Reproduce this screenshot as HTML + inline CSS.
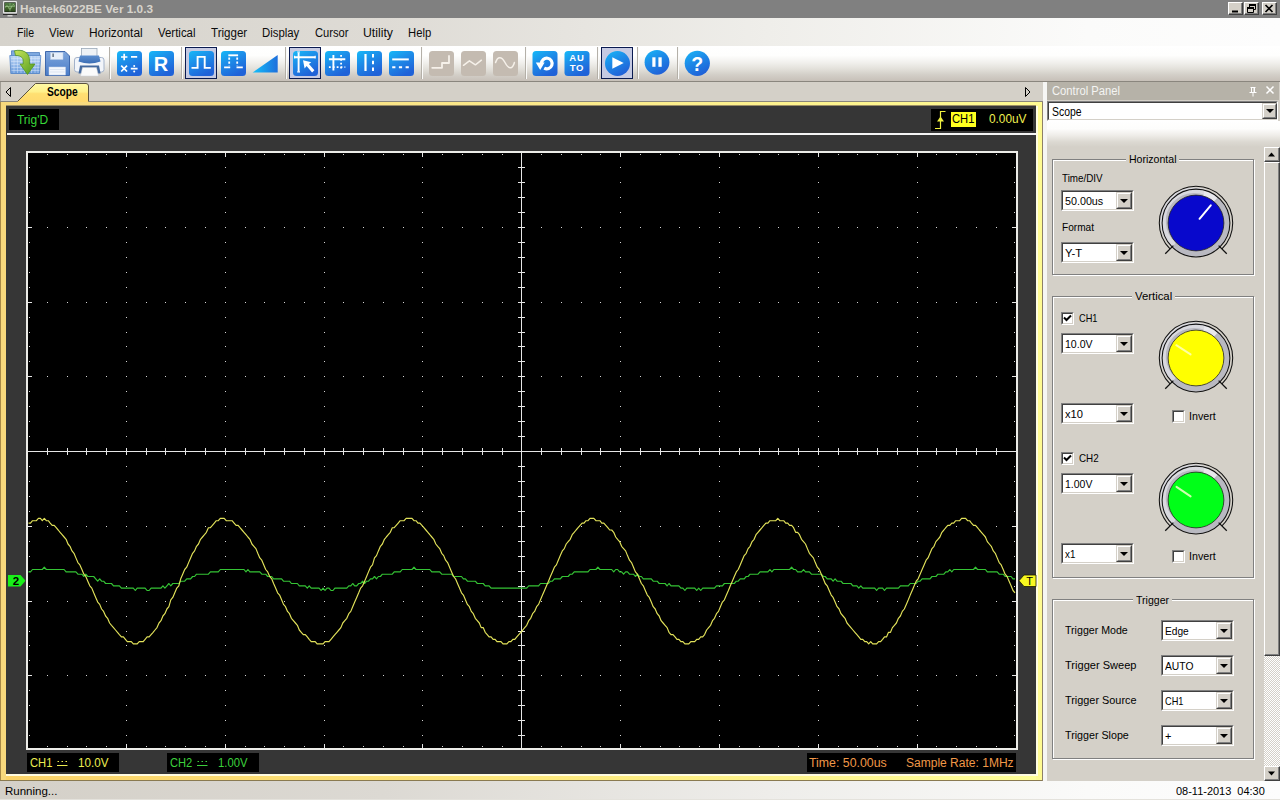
<!DOCTYPE html>
<html lang="en"><head><meta charset="utf-8"><title>Hantek6022BE Ver 1.0.3</title>
<style>
html,body{margin:0;padding:0;}
body{width:1280px;height:800px;overflow:hidden;background:#d4d0c8;font-family:"Liberation Sans",sans-serif;position:relative;}
#app{position:absolute;left:0;top:0;width:1280px;height:800px;overflow:hidden;}
#app div,#app span.t,#app svg{position:absolute;box-sizing:border-box;}
span.t{white-space:pre;display:block;}
.combo{background:#fff;border:1px solid;border-color:#808080 #fff #fff #808080;}
.combo:before{content:"";position:absolute;left:0;top:0;right:0;bottom:0;border:1px solid;border-color:#404040 #d4d0c8 #d4d0c8 #404040;}
.cbtn{background:#d4d0c8;border:1px solid;border-color:#d4d0c8 #404040 #404040 #d4d0c8;}
.cbtn:before{content:"";position:absolute;left:0;top:0;right:0;bottom:0;border:1px solid;border-color:#fff #808080 #808080 #fff;}
.cbtn:after{content:"";position:absolute;left:50%;top:50%;margin:-2px 0 0 -4px;border:4px solid transparent;border-top-color:#000;border-bottom-width:0;}
.grp{border:1px solid #808080;box-shadow:1px 1px 0 #fff, inset 1px 1px 0 #fff;}
.chk{background:#fff;border:1px solid;border-color:#808080 #fff #fff #808080;}
.chk:before{content:"";position:absolute;left:0;top:0;right:0;bottom:0;border:1px solid;border-color:#404040 #d4d0c8 #d4d0c8 #404040;}
.wbtn{background:#d4d0c8;border:1px solid;border-color:#fff #404040 #404040 #fff;box-shadow:inset -1px -1px 0 #808080;}
.sel{background:#c6cae2;border:1px solid #0a1a50;}
.sep{width:1px;background:#b4b0a8;box-shadow:1px 0 0 #fbfbfa;}
</style></head><body><div id="app">

<div style="left:0px;top:0px;width:1280px;height:18px;background:#808080;"></div>
<svg style="left:2px;top:0px" width="17" height="18" viewBox="2 0 17 18"><defs><linearGradient id="scr" x1="0" y1="0" x2="0" y2="1"><stop offset="0" stop-color="#4f7a45"/><stop offset="0.5" stop-color="#456a30"/><stop offset="1" stop-color="#2c4a1c"/></linearGradient></defs>
<rect x="3" y="1" width="14" height="12.500" rx="1" fill="#e6e6e6"/><rect x="4.300" y="2.300" width="11.400" height="9.800" fill="#1c2a16"/><rect x="5" y="3" width="10" height="8.400" fill="url(#scr)"/>
<path d="M5 6.500h10M10 3v8.400" stroke="#9cc890" stroke-width="0.7" opacity="0.7"/><path d="M5.500 7.500q1.500-4 3 0t3-0.500 3-1" stroke="#b8e0a0" stroke-width="0.7" fill="none" opacity="0.8"/>
<rect x="3" y="14" width="14" height="1" fill="#2a2a2a"/><rect x="7.500" y="15" width="5" height="1.500" fill="#d0d0d0"/></svg>
<span class="t" id="t1" style="left:20.00px;top:2.19px;font-size:11px;line-height:14px;color:#d8d4cc;font-weight:bold;transform:scaleX(1.0714);transform-origin:0 0;">Hantek6022BE Ver 1.0.3</span>
<div class="wbtn" style="left:1228px;top:2px;width:15px;height:13px"></div>
<div class="wbtn" style="left:1244px;top:2px;width:15px;height:13px"></div>
<div class="wbtn" style="left:1262px;top:2px;width:15px;height:13px"></div>
<svg style="left:1228px;top:2px" width="50" height="14" viewBox="0 0 50 14">
<rect x="4" y="8.500" width="6" height="2" fill="#000"/>
<path d="M21.5 2.5h6v5h-6zM21.500 3.500h6" stroke="#000" fill="none" stroke-width="1"/><path d="M21 3h7" stroke="#000" stroke-width="2"/>
<path d="M19.500 5.500h6v5h-6z" stroke="#000" fill="#d4d0c8" stroke-width="1"/><path d="M19 6h7" stroke="#000" stroke-width="2"/>
<path d="M37.500 3l7 7M44.500 3l-7 7" stroke="#000" stroke-width="1.700"/>
</svg>
<div style="left:0px;top:18px;width:1280px;height:28px;background:linear-gradient(90deg,#d6d3cc 0%,#dedbd5 30%,#efeeea 60%,#fbfbfa 85%,#fdfdfd 100%);"></div>
<span class="t" id="t2" style="left:16.50px;top:24.54px;font-size:12px;line-height:16px;color:#0c0c0c;transform:scaleX(0.8788);transform-origin:0 0;">File</span>
<span class="t" id="t3" style="left:49.30px;top:24.54px;font-size:12px;line-height:16px;color:#0c0c0c;transform:scaleX(0.9497);transform-origin:0 0;">View</span>
<span class="t" id="t4" style="left:89.30px;top:24.54px;font-size:12px;line-height:16px;color:#0c0c0c;transform:scaleX(0.9939);transform-origin:0 0;">Horizontal</span>
<span class="t" id="t5" style="left:158.30px;top:24.54px;font-size:12px;line-height:16px;color:#0c0c0c;transform:scaleX(0.9528);transform-origin:0 0;">Vertical</span>
<span class="t" id="t6" style="left:210.80px;top:24.54px;font-size:12px;line-height:16px;color:#0c0c0c;transform:scaleX(0.9633);transform-origin:0 0;">Trigger</span>
<span class="t" id="t7" style="left:262.00px;top:24.54px;font-size:12px;line-height:16px;color:#0c0c0c;transform:scaleX(0.9477);transform-origin:0 0;">Display</span>
<span class="t" id="t8" style="left:314.50px;top:24.54px;font-size:12px;line-height:16px;color:#0c0c0c;transform:scaleX(0.9302);transform-origin:0 0;">Cursor</span>
<span class="t" id="t9" style="left:363.30px;top:24.54px;font-size:12px;line-height:16px;color:#0c0c0c;transform:scaleX(1.0224);transform-origin:0 0;">Utility</span>
<span class="t" id="t10" style="left:408.30px;top:24.54px;font-size:12px;line-height:16px;color:#0c0c0c;transform:scaleX(0.9397);transform-origin:0 0;">Help</span>
<div style="left:0px;top:46px;width:1280px;height:35px;background:linear-gradient(180deg,#ffffff 0%,#fefefd 27%,#f2f1ee 46%,#e4e2dc 64%,#d3cfc8 82%,#c7c0b8 100%);"></div>
<div style="left:0px;top:81px;width:1280px;height:1px;background:#8a867e;"></div>
<div class="sep" style="left:109px;top:47px;height:32px"></div>
<div class="sep" style="left:181px;top:47px;height:32px"></div>
<div class="sep" style="left:285px;top:47px;height:32px"></div>
<div class="sep" style="left:421px;top:47px;height:32px"></div>
<div class="sep" style="left:525px;top:47px;height:32px"></div>
<div class="sep" style="left:597px;top:47px;height:32px"></div>
<div class="sep" style="left:637px;top:47px;height:32px"></div>
<div class="sep" style="left:677px;top:47px;height:32px"></div>
<div class="sel" style="left:185px;top:47px;width:32px;height:32px"></div>
<div class="sel" style="left:289px;top:47px;width:32px;height:32px"></div>
<div class="sel" style="left:601px;top:47px;width:32px;height:32px"></div>
<svg style="left:0;top:46px" width="720" height="35" viewBox="0 46 720 35">
<defs>
<linearGradient id="gb" x1="0" y1="0" x2="0.55" y2="1"><stop offset="0" stop-color="#16b9f8"/><stop offset="0.45" stop-color="#1d8ee9"/><stop offset="1" stop-color="#2062d8"/></linearGradient>
<linearGradient id="gt" x1="0" y1="0.5" x2="1" y2="0.5"><stop offset="0" stop-color="#14c0fa"/><stop offset="1" stop-color="#1f6fdc"/></linearGradient>
<linearGradient id="gf" x1="0" y1="0" x2="0" y2="1"><stop offset="0" stop-color="#bcd6f6"/><stop offset="1" stop-color="#6b9cdc"/></linearGradient>
<linearGradient id="gg" x1="0" y1="0" x2="1" y2="1"><stop offset="0" stop-color="#c6e45a"/><stop offset="1" stop-color="#4f9a1c"/></linearGradient>
<linearGradient id="gs" x1="0" y1="0" x2="0" y2="1"><stop offset="0" stop-color="#7fa6dc"/><stop offset="1" stop-color="#4a7cc8"/></linearGradient>
<linearGradient id="gp" x1="0" y1="0" x2="0" y2="1"><stop offset="0" stop-color="#5d8fd0"/><stop offset="1" stop-color="#3c6db4"/></linearGradient>
</defs>
<g>
<path d="M11.500 50.800h11l1.800 1.700h15.200v20.500h-28z" fill="#7ea9e0" stroke="#4f7dbd" stroke-width="0.8"/>
<path d="M9.800 55.500h31l-1.200 18h-28.800z" fill="url(#gf)" stroke="#5585c6" stroke-width="0.8"/>
<path d="M11 58.500h29M11 61.500h29M11.500 64.500h28M11.500 67.500h28M11.500 70.500h28M14 56v17M17.500 56v17M21 56v17M24.500 56v17M28 56v17M31.500 56v17M35 56v17M38 56v17" stroke="#e4effc" stroke-width="0.5" opacity="0.85"/>
<path d="M14.500 50.800C22 49 29.500 52 29.500 60V64H35L27.500 74.500L20 64H23.200V61C23.200 57 20 55.500 15.500 55.500Z" fill="url(#gg)" stroke="#4d8f1a" stroke-width="0.7"/>
</g>
<g>
<path d="M45.500 51.500h19.500l4.500 4.500v19.500h-24z" fill="url(#gs)" stroke="#3f68ac" stroke-width="1"/>
<rect x="50.500" y="52.500" width="12.500" height="7" fill="#e6eefa" stroke="#b7c9e6" stroke-width="0.5"/>
<rect x="52.500" y="53.500" width="1.200" height="3.500" fill="#456"/>
<rect x="49" y="67" width="16.500" height="8" fill="#f4f7fc" stroke="#c7d3e8" stroke-width="0.5"/>
<path d="M50 69.500h14.500M50 72h14.500" stroke="#cfd9ea" stroke-width="0.6"/>
</g>
<g>
<rect x="81.500" y="48.500" width="15.500" height="9" fill="#eef2f6" stroke="#9aa8b8" stroke-width="0.8"/>
<rect x="74.500" y="57.500" width="29.500" height="14.500" rx="2.500" fill="#f2f5fa" stroke="#a3b2ca" stroke-width="1"/>
<path d="M80 55.500h19l1.500 6q-11 4-22 0z" fill="url(#gp)"/>
<path d="M80 65.500h19l1.500 8h-22z" fill="#44699e"/>
<path d="M82.500 67.500h14l2 8.500h-18z" fill="#fbfbfb" stroke="#c8ccd4" stroke-width="0.5"/>
</g>
<rect x="117" y="51" width="25" height="25" rx="3.5" fill="url(#gb)"/>
<path d="M121 57h6.400M124.200 53.800v6.400M131 56.800h6.200M121.200 65.700l5.800 5.800M127 65.700l-5.800 5.800M130.800 68.700h6.800" stroke="#fff" fill="none" stroke-width="1.700"/>
<circle cx="134.200" cy="65.900" r="1" fill="#fff"/><circle cx="134.200" cy="71.500" r="1" fill="#fff"/>
<rect x="149" y="51" width="25" height="25" rx="3.5" fill="url(#gb)"/>
<text x="161.100" y="71" text-anchor="middle" font-family="Liberation Sans, sans-serif" font-weight="bold" font-size="20" fill="#fff">R</text>
<rect x="189" y="51" width="25" height="25" rx="3.5" fill="url(#gb)"/>
<path d="M191.500 67.900h6.100v-11h7.100v11h6.100" stroke="#fff" fill="none" stroke-width="1.900"/>
<rect x="221" y="51" width="25" height="25" rx="3.5" fill="url(#gb)"/>
<path d="M228.300 55.300h9.800" stroke="#fff" fill="none" stroke-width="1.900"/><path d="M224.100 67.400h6.100M236.500 67.400h6.300" stroke="#fff" fill="none" stroke-width="1.900"/>
<path d="M229.200 57.500v8.500M237.200 57.500v8.500" stroke="#fff" stroke-width="1.800" stroke-dasharray="2.200 1.900" fill="none"/>
<path d="M252.600 72.600h25.100v-17.600z" fill="url(#gt)"/>
<rect x="293" y="51" width="25" height="25" rx="3.5" fill="url(#gb)"/>
<path d="M298.600 52.500v19M295 57.200h20" stroke="#fff" fill="none" stroke-width="1.900"/>
<path d="M297.200 52h2.800M297.200 71.800h2.800" stroke="#fff" stroke-width="1.200"/><path d="M294.600 55.800v2.800M315.200 55.800v2.800" stroke="#fff" stroke-width="1.200"/>
<path d="M303 60.300l8.300 2-2.400 1.800 5.500 6.200-2.300 2.100-5.500-6.300-2 2.300z" fill="#fff"/>
<rect x="325" y="51" width="25" height="25" rx="3.5" fill="url(#gb)"/>
<path d="M333.400 55v15.500M328.900 59.200h16.400" stroke="#fff" fill="none" stroke-width="1.900"/>
<path d="M341.100 55v15.500" stroke="#fff" stroke-width="1.800" stroke-dasharray="1.800 2.100" fill="none"/><path d="M328.900 67.200h16.400" stroke="#fff" stroke-width="1.800" stroke-dasharray="1.800 2.100" fill="none"/>
<rect x="357" y="51" width="25" height="25" rx="3.5" fill="url(#gb)"/>
<path d="M365.500 54v17" stroke="#fff" fill="none" stroke-width="2.200"/><path d="M373 54v17" stroke="#fff" stroke-width="2" stroke-dasharray="3.400 3.400" fill="none"/>
<rect x="389" y="51" width="25" height="25" rx="3.5" fill="url(#gb)"/>
<path d="M392.200 59.400h16.600" stroke="#fff" fill="none" stroke-width="2"/><path d="M392.200 67.200h16.600" stroke="#fff" stroke-width="2" stroke-dasharray="3.200 3.500" fill="none"/>
<rect x="429" y="51" width="25" height="25" rx="3.5" fill="#c4bbb1"/>
<path d="M432.200 67.800h9.800v-4.800h7v-7" stroke="#f6f1ea" fill="none" stroke-linecap="round" stroke-linejoin="round" stroke-width="1.800"/>
<rect x="461" y="51" width="25" height="25" rx="3.5" fill="#c4bbb1"/>
<path d="M463.500 65.300l5.900-4.500 6 4 6-4.600" stroke="#f6f1ea" fill="none" stroke-linecap="round" stroke-linejoin="round" stroke-width="1.500"/>
<rect x="493" y="51" width="25" height="25" rx="3.5" fill="#c4bbb1"/>
<path d="M495.600 62.500c2-6.500 6-6.500 9.400 0s7.400 7.500 9.400 0" stroke="#f6f1ea" fill="none" stroke-linecap="round" stroke-linejoin="round" stroke-width="1.500"/>
<rect x="532.5" y="51" width="25" height="25" rx="3.5" fill="url(#gb)"/>
<path d="M541.500 63.600A5.300 5.300 0 1 1 544.200 68.100" stroke="#fff" stroke-width="3.200" fill="none"/><path d="M535.800 62.600h8.800l-4.400 7.300z" fill="#fff"/>
<rect x="564.5" y="51" width="25" height="25" rx="3.5" fill="url(#gb)"/>
<text font-family="Liberation Sans, sans-serif" font-weight="bold" font-size="9.500" fill="#fff" letter-spacing="0.8"><tspan x="569.300" y="61">AU</tspan><tspan x="569.700" y="70.900">TO</tspan></text>
<circle cx="617.500" cy="63.500" r="12.500" fill="url(#gb)"/><path d="M612.300 57.300v11.400l11.400-5.700z" fill="#fff"/>
<circle cx="657" cy="62.300" r="12.400" fill="url(#gb)"/><rect x="652.300" y="57.300" width="3.200" height="9.500" fill="#fff"/><rect x="658.400" y="57.300" width="3.300" height="9.500" fill="#fff"/>
<circle cx="697.300" cy="63.300" r="12.600" fill="url(#gb)"/><text x="697.300" y="70.700" text-anchor="middle" font-family="Liberation Sans, sans-serif" font-weight="bold" font-size="19.500" fill="#fff">?</text>
</svg>
<div style="left:0px;top:82px;width:1043px;height:20px;background:#d4d0c8;"></div>
<div style="left:0px;top:82px;width:1px;height:20px;background:#a09c94;"></div>
<svg style="left:0;top:82px" width="1043" height="20" viewBox="0 82 1043 20">
<defs><linearGradient id="tabg" x1="0" y1="0" x2="0" y2="1"><stop offset="0" stop-color="#fffaa6"/><stop offset="0.45" stop-color="#fff08a"/><stop offset="0.55" stop-color="#ffdf72"/><stop offset="1" stop-color="#ffd96e"/></linearGradient></defs>
<path d="M0 101.500h17.500M88.500 101.500h955" stroke="#8a867e" stroke-width="1" fill="none"/>
<path d="M17 102L35.500 83.500h50.500q2.500 0 2.500 2.500v16z" fill="url(#tabg)"/>
<path d="M17.500 101.500L35.500 83.500h50.500q2.500 0 2.500 2.500v15.500" stroke="#5c5340" stroke-width="1" fill="none"/>
<path d="M10.500 87.500v9l-4.500-4.500z" stroke="#000" stroke-width="1" fill="none"/>
<path d="M1025.500 87.500v9l4.500-4.500z" stroke="#000" stroke-width="1" fill="none"/>
</svg>
<span class="t" id="t11" style="left:47.30px;top:83.64px;font-size:12px;line-height:16px;color:#000;font-weight:bold;transform:scaleX(0.8524);transform-origin:0 0;">Scope</span>
<div style="left:0px;top:102px;width:1043px;height:679px;background:linear-gradient(90deg,#f7d87c 0%,#fbe98a 50%,#fffb92 100%);"></div>
<div style="left:0px;top:102px;width:1px;height:679px;background:#a88a48;"></div>
<div style="left:0px;top:780px;width:1043px;height:1px;background:#8a7a50;"></div>
<div style="left:1042px;top:102px;width:1px;height:679px;background:#8e8068;"></div>
<div style="left:1036px;top:106px;width:2px;height:670px;background:#fffde2;"></div>
<div style="left:6px;top:105px;width:1030px;height:1px;background:#9c8e66;"></div>
<div style="left:6px;top:774px;width:1030px;height:2px;background:#fffbe0;"></div>
<div style="left:6px;top:776px;width:1030px;height:4px;background:linear-gradient(90deg,#fbd268,#fde87c 50%,#ffff98);"></div>
<div style="left:6px;top:106px;width:1030px;height:668px;background:#363636;"></div>
<div style="left:9px;top:109px;width:50px;height:21px;background:#000;"></div>
<span class="t" id="t12" style="left:17.00px;top:111.84px;font-size:12px;line-height:16px;color:#38d838;transform:scaleX(0.9972);transform-origin:0 0;">Trig'D</span>
<div style="left:931px;top:109px;width:102px;height:22px;background:#000;"></div>
<svg style="left:933px;top:109px" width="16" height="22" viewBox="933 109 16 22"><path d="M935 128.500h5.500v-17h5" stroke="#f0f040" stroke-width="1.200" fill="none"/><path d="M937 121.500l3.500-5 3.500 5z" fill="#f0f040"/></svg>
<div style="left:951px;top:112px;width:25px;height:15px;background:#ffff20;"></div>
<span class="t" id="t13" style="left:952.00px;top:111.44px;font-size:12px;line-height:16px;color:#000;transform:scaleX(0.9327);transform-origin:0 0;">CH1</span>
<span class="t" id="t14" style="left:988.50px;top:111.44px;font-size:12px;line-height:16px;color:#f0f050;transform:scaleX(0.9856);transform-origin:0 0;">0.00uV</span>
<div style="left:7px;top:133px;width:1029px;height:2px;background:#f4f4f4;"></div>
<div style="left:27px;top:753px;width:92px;height:19px;background:#000;"></div>
<div style="left:167px;top:753px;width:92px;height:19px;background:#000;"></div>
<div style="left:807px;top:753px;width:209px;height:19px;background:#000;"></div>
<span class="t" id="t15" style="left:29.50px;top:754.84px;font-size:12px;line-height:16px;color:#ecec50;transform:scaleX(0.9327);transform-origin:0 0;">CH1</span>
<span class="t" id="t16" style="left:77.90px;top:754.84px;font-size:12px;line-height:16px;color:#ecec50;transform:scaleX(0.9726);transform-origin:0 0;">10.0V</span>
<span class="t" id="t17" style="left:169.70px;top:754.84px;font-size:12px;line-height:16px;color:#3cd03c;transform:scaleX(0.9286);transform-origin:0 0;">CH2</span>
<span class="t" id="t18" style="left:218.00px;top:754.84px;font-size:12px;line-height:16px;color:#3cd03c;transform:scaleX(0.9407);transform-origin:0 0;">1.00V</span>
<svg style="left:56px;top:758px" width="160" height="10" viewBox="56 758 160 10"><path d="M57 765.500h10.500" stroke="#ecec50" stroke-width="1"/><path d="M57.500 761.500h10" stroke="#ecec50" stroke-width="1" stroke-dasharray="1.500 2.500"/><path d="M197 765.500h10.500" stroke="#3cd03c" stroke-width="1"/><path d="M197.500 761.500h10" stroke="#3cd03c" stroke-width="1" stroke-dasharray="1.500 2.500"/></svg>
<span class="t" id="t19" style="left:809.30px;top:754.84px;font-size:12px;line-height:16px;color:#f09848;transform:scaleX(1.0279);transform-origin:0 0;">Time: 50.00us</span>
<span class="t" id="t20" style="left:906.40px;top:754.84px;font-size:12px;line-height:16px;color:#f09848;transform:scaleX(1.0021);transform-origin:0 0;">Sample Rate: 1MHz</span>
<div style="left:26px;top:151px;width:992px;height:599px;background:#000;border:2px solid #ecece8;"></div>
<svg style="left:28px;top:153px" width="988" height="595" viewBox="28 153 988 595">
<path d="M126 167.5h1M126 182.5h1M126 197.5h1M126 212.5h1M126 227.5h1M126 242.5h1M126 257.5h1M126 272.5h1M126 287.5h1M126 302.5h1M126 317.5h1M126 332.5h1M126 346.5h1M126 361.5h1M126 376.5h1M126 391.5h1M126 406.5h1M126 421.5h1M126 436.5h1M126 451.5h1M126 466.5h1M126 481.5h1M126 496.5h1M126 511.5h1M126 526.5h1M126 541.5h1M126 556.5h1M126 571.5h1M126 586.5h1M126 601.5h1M126 616.5h1M126 631.5h1M126 645.5h1M126 660.5h1M126 675.5h1M126 690.5h1M126 705.5h1M126 720.5h1M126 735.5h1M225 167.5h1M225 182.5h1M225 197.5h1M225 212.5h1M225 227.5h1M225 242.5h1M225 257.5h1M225 272.5h1M225 287.5h1M225 302.5h1M225 317.5h1M225 332.5h1M225 346.5h1M225 361.5h1M225 376.5h1M225 391.5h1M225 406.5h1M225 421.5h1M225 436.5h1M225 451.5h1M225 466.5h1M225 481.5h1M225 496.5h1M225 511.5h1M225 526.5h1M225 541.5h1M225 556.5h1M225 571.5h1M225 586.5h1M225 601.5h1M225 616.5h1M225 631.5h1M225 645.5h1M225 660.5h1M225 675.5h1M225 690.5h1M225 705.5h1M225 720.5h1M225 735.5h1M324 167.5h1M324 182.5h1M324 197.5h1M324 212.5h1M324 227.5h1M324 242.5h1M324 257.5h1M324 272.5h1M324 287.5h1M324 302.5h1M324 317.5h1M324 332.5h1M324 346.5h1M324 361.5h1M324 376.5h1M324 391.5h1M324 406.5h1M324 421.5h1M324 436.5h1M324 451.5h1M324 466.5h1M324 481.5h1M324 496.5h1M324 511.5h1M324 526.5h1M324 541.5h1M324 556.5h1M324 571.5h1M324 586.5h1M324 601.5h1M324 616.5h1M324 631.5h1M324 645.5h1M324 660.5h1M324 675.5h1M324 690.5h1M324 705.5h1M324 720.5h1M324 735.5h1M422 167.5h1M422 182.5h1M422 197.5h1M422 212.5h1M422 227.5h1M422 242.5h1M422 257.5h1M422 272.5h1M422 287.5h1M422 302.5h1M422 317.5h1M422 332.5h1M422 346.5h1M422 361.5h1M422 376.5h1M422 391.5h1M422 406.5h1M422 421.5h1M422 436.5h1M422 451.5h1M422 466.5h1M422 481.5h1M422 496.5h1M422 511.5h1M422 526.5h1M422 541.5h1M422 556.5h1M422 571.5h1M422 586.5h1M422 601.5h1M422 616.5h1M422 631.5h1M422 645.5h1M422 660.5h1M422 675.5h1M422 690.5h1M422 705.5h1M422 720.5h1M422 735.5h1M620 167.5h1M620 182.5h1M620 197.5h1M620 212.5h1M620 227.5h1M620 242.5h1M620 257.5h1M620 272.5h1M620 287.5h1M620 302.5h1M620 317.5h1M620 332.5h1M620 346.5h1M620 361.5h1M620 376.5h1M620 391.5h1M620 406.5h1M620 421.5h1M620 436.5h1M620 451.5h1M620 466.5h1M620 481.5h1M620 496.5h1M620 511.5h1M620 526.5h1M620 541.5h1M620 556.5h1M620 571.5h1M620 586.5h1M620 601.5h1M620 616.5h1M620 631.5h1M620 645.5h1M620 660.5h1M620 675.5h1M620 690.5h1M620 705.5h1M620 720.5h1M620 735.5h1M719 167.5h1M719 182.5h1M719 197.5h1M719 212.5h1M719 227.5h1M719 242.5h1M719 257.5h1M719 272.5h1M719 287.5h1M719 302.5h1M719 317.5h1M719 332.5h1M719 346.5h1M719 361.5h1M719 376.5h1M719 391.5h1M719 406.5h1M719 421.5h1M719 436.5h1M719 451.5h1M719 466.5h1M719 481.5h1M719 496.5h1M719 511.5h1M719 526.5h1M719 541.5h1M719 556.5h1M719 571.5h1M719 586.5h1M719 601.5h1M719 616.5h1M719 631.5h1M719 645.5h1M719 660.5h1M719 675.5h1M719 690.5h1M719 705.5h1M719 720.5h1M719 735.5h1M818 167.5h1M818 182.5h1M818 197.5h1M818 212.5h1M818 227.5h1M818 242.5h1M818 257.5h1M818 272.5h1M818 287.5h1M818 302.5h1M818 317.5h1M818 332.5h1M818 346.5h1M818 361.5h1M818 376.5h1M818 391.5h1M818 406.5h1M818 421.5h1M818 436.5h1M818 451.5h1M818 466.5h1M818 481.5h1M818 496.5h1M818 511.5h1M818 526.5h1M818 541.5h1M818 556.5h1M818 571.5h1M818 586.5h1M818 601.5h1M818 616.5h1M818 631.5h1M818 645.5h1M818 660.5h1M818 675.5h1M818 690.5h1M818 705.5h1M818 720.5h1M818 735.5h1M917 167.5h1M917 182.5h1M917 197.5h1M917 212.5h1M917 227.5h1M917 242.5h1M917 257.5h1M917 272.5h1M917 287.5h1M917 302.5h1M917 317.5h1M917 332.5h1M917 346.5h1M917 361.5h1M917 376.5h1M917 391.5h1M917 406.5h1M917 421.5h1M917 436.5h1M917 451.5h1M917 466.5h1M917 481.5h1M917 496.5h1M917 511.5h1M917 526.5h1M917 541.5h1M917 556.5h1M917 571.5h1M917 586.5h1M917 601.5h1M917 616.5h1M917 631.5h1M917 645.5h1M917 660.5h1M917 675.5h1M917 690.5h1M917 705.5h1M917 720.5h1M917 735.5h1M47 227.5h1M67 227.5h1M86 227.5h1M106 227.5h1M126 227.5h1M146 227.5h1M165 227.5h1M185 227.5h1M205 227.5h1M225 227.5h1M245 227.5h1M264 227.5h1M284 227.5h1M304 227.5h1M324 227.5h1M343 227.5h1M363 227.5h1M383 227.5h1M403 227.5h1M422 227.5h1M442 227.5h1M462 227.5h1M482 227.5h1M502 227.5h1M521 227.5h1M541 227.5h1M561 227.5h1M581 227.5h1M600 227.5h1M620 227.5h1M640 227.5h1M660 227.5h1M679 227.5h1M699 227.5h1M719 227.5h1M739 227.5h1M759 227.5h1M778 227.5h1M798 227.5h1M818 227.5h1M838 227.5h1M857 227.5h1M877 227.5h1M897 227.5h1M917 227.5h1M936 227.5h1M956 227.5h1M976 227.5h1M996 227.5h1M47 302.5h1M67 302.5h1M86 302.5h1M106 302.5h1M126 302.5h1M146 302.5h1M165 302.5h1M185 302.5h1M205 302.5h1M225 302.5h1M245 302.5h1M264 302.5h1M284 302.5h1M304 302.5h1M324 302.5h1M343 302.5h1M363 302.5h1M383 302.5h1M403 302.5h1M422 302.5h1M442 302.5h1M462 302.5h1M482 302.5h1M502 302.5h1M521 302.5h1M541 302.5h1M561 302.5h1M581 302.5h1M600 302.5h1M620 302.5h1M640 302.5h1M660 302.5h1M679 302.5h1M699 302.5h1M719 302.5h1M739 302.5h1M759 302.5h1M778 302.5h1M798 302.5h1M818 302.5h1M838 302.5h1M857 302.5h1M877 302.5h1M897 302.5h1M917 302.5h1M936 302.5h1M956 302.5h1M976 302.5h1M996 302.5h1M47 376.5h1M67 376.5h1M86 376.5h1M106 376.5h1M126 376.5h1M146 376.5h1M165 376.5h1M185 376.5h1M205 376.5h1M225 376.5h1M245 376.5h1M264 376.5h1M284 376.5h1M304 376.5h1M324 376.5h1M343 376.5h1M363 376.5h1M383 376.5h1M403 376.5h1M422 376.5h1M442 376.5h1M462 376.5h1M482 376.5h1M502 376.5h1M521 376.5h1M541 376.5h1M561 376.5h1M581 376.5h1M600 376.5h1M620 376.5h1M640 376.5h1M660 376.5h1M679 376.5h1M699 376.5h1M719 376.5h1M739 376.5h1M759 376.5h1M778 376.5h1M798 376.5h1M818 376.5h1M838 376.5h1M857 376.5h1M877 376.5h1M897 376.5h1M917 376.5h1M936 376.5h1M956 376.5h1M976 376.5h1M996 376.5h1M47 526.5h1M67 526.5h1M86 526.5h1M106 526.5h1M126 526.5h1M146 526.5h1M165 526.5h1M185 526.5h1M205 526.5h1M225 526.5h1M245 526.5h1M264 526.5h1M284 526.5h1M304 526.5h1M324 526.5h1M343 526.5h1M363 526.5h1M383 526.5h1M403 526.5h1M422 526.5h1M442 526.5h1M462 526.5h1M482 526.5h1M502 526.5h1M521 526.5h1M541 526.5h1M561 526.5h1M581 526.5h1M600 526.5h1M620 526.5h1M640 526.5h1M660 526.5h1M679 526.5h1M699 526.5h1M719 526.5h1M739 526.5h1M759 526.5h1M778 526.5h1M798 526.5h1M818 526.5h1M838 526.5h1M857 526.5h1M877 526.5h1M897 526.5h1M917 526.5h1M936 526.5h1M956 526.5h1M976 526.5h1M996 526.5h1M47 601.5h1M67 601.5h1M86 601.5h1M106 601.5h1M126 601.5h1M146 601.5h1M165 601.5h1M185 601.5h1M205 601.5h1M225 601.5h1M245 601.5h1M264 601.5h1M284 601.5h1M304 601.5h1M324 601.5h1M343 601.5h1M363 601.5h1M383 601.5h1M403 601.5h1M422 601.5h1M442 601.5h1M462 601.5h1M482 601.5h1M502 601.5h1M521 601.5h1M541 601.5h1M561 601.5h1M581 601.5h1M600 601.5h1M620 601.5h1M640 601.5h1M660 601.5h1M679 601.5h1M699 601.5h1M719 601.5h1M739 601.5h1M759 601.5h1M778 601.5h1M798 601.5h1M818 601.5h1M838 601.5h1M857 601.5h1M877 601.5h1M897 601.5h1M917 601.5h1M936 601.5h1M956 601.5h1M976 601.5h1M996 601.5h1M47 675.5h1M67 675.5h1M86 675.5h1M106 675.5h1M126 675.5h1M146 675.5h1M165 675.5h1M185 675.5h1M205 675.5h1M225 675.5h1M245 675.5h1M264 675.5h1M284 675.5h1M304 675.5h1M324 675.5h1M343 675.5h1M363 675.5h1M383 675.5h1M403 675.5h1M422 675.5h1M442 675.5h1M462 675.5h1M482 675.5h1M502 675.5h1M521 675.5h1M541 675.5h1M561 675.5h1M581 675.5h1M600 675.5h1M620 675.5h1M640 675.5h1M660 675.5h1M679 675.5h1M699 675.5h1M719 675.5h1M739 675.5h1M759 675.5h1M778 675.5h1M798 675.5h1M818 675.5h1M838 675.5h1M857 675.5h1M877 675.5h1M897 675.5h1M917 675.5h1M936 675.5h1M956 675.5h1M976 675.5h1M996 675.5h1M47 154.5h1M47 746.5h1M67 154.5h1M67 746.5h1M86 154.5h1M86 746.5h1M106 154.5h1M106 746.5h1M126 154.5h1M126 746.5h1M146 154.5h1M146 746.5h1M165 154.5h1M165 746.5h1M185 154.5h1M185 746.5h1M205 154.5h1M205 746.5h1M225 154.5h1M225 746.5h1M245 154.5h1M245 746.5h1M264 154.5h1M264 746.5h1M284 154.5h1M284 746.5h1M304 154.5h1M304 746.5h1M324 154.5h1M324 746.5h1M343 154.5h1M343 746.5h1M363 154.5h1M363 746.5h1M383 154.5h1M383 746.5h1M403 154.5h1M403 746.5h1M422 154.5h1M422 746.5h1M442 154.5h1M442 746.5h1M462 154.5h1M462 746.5h1M482 154.5h1M482 746.5h1M502 154.5h1M502 746.5h1M521 154.5h1M521 746.5h1M541 154.5h1M541 746.5h1M561 154.5h1M561 746.5h1M581 154.5h1M581 746.5h1M600 154.5h1M600 746.5h1M620 154.5h1M620 746.5h1M640 154.5h1M640 746.5h1M660 154.5h1M660 746.5h1M679 154.5h1M679 746.5h1M699 154.5h1M699 746.5h1M719 154.5h1M719 746.5h1M739 154.5h1M739 746.5h1M759 154.5h1M759 746.5h1M778 154.5h1M778 746.5h1M798 154.5h1M798 746.5h1M818 154.5h1M818 746.5h1M838 154.5h1M838 746.5h1M857 154.5h1M857 746.5h1M877 154.5h1M877 746.5h1M897 154.5h1M897 746.5h1M917 154.5h1M917 746.5h1M936 154.5h1M936 746.5h1M956 154.5h1M956 746.5h1M976 154.5h1M976 746.5h1M996 154.5h1M996 746.5h1M29 167.5h1M1014 167.5h1M29 182.5h1M1014 182.5h1M29 197.5h1M1014 197.5h1M29 212.5h1M1014 212.5h1M29 227.5h1M1014 227.5h1M29 242.5h1M1014 242.5h1M29 257.5h1M1014 257.5h1M29 272.5h1M1014 272.5h1M29 287.5h1M1014 287.5h1M29 302.5h1M1014 302.5h1M29 317.5h1M1014 317.5h1M29 332.5h1M1014 332.5h1M29 346.5h1M1014 346.5h1M29 361.5h1M1014 361.5h1M29 376.5h1M1014 376.5h1M29 391.5h1M1014 391.5h1M29 406.5h1M1014 406.5h1M29 421.5h1M1014 421.5h1M29 436.5h1M1014 436.5h1M29 451.5h1M1014 451.5h1M29 466.5h1M1014 466.5h1M29 481.5h1M1014 481.5h1M29 496.5h1M1014 496.5h1M29 511.5h1M1014 511.5h1M29 526.5h1M1014 526.5h1M29 541.5h1M1014 541.5h1M29 556.5h1M1014 556.5h1M29 571.5h1M1014 571.5h1M29 586.5h1M1014 586.5h1M29 601.5h1M1014 601.5h1M29 616.5h1M1014 616.5h1M29 631.5h1M1014 631.5h1M29 645.5h1M1014 645.5h1M29 660.5h1M1014 660.5h1M29 675.5h1M1014 675.5h1M29 690.5h1M1014 690.5h1M29 705.5h1M1014 705.5h1M29 720.5h1M1014 720.5h1M29 735.5h1M1014 735.5h1" stroke="#d4d4d4" stroke-width="1" fill="none" shape-rendering="crispEdges"/>
<path d="M126.5 153v4M126.5 744v4M225.5 153v4M225.5 744v4M324.5 153v4M324.5 744v4M422.5 153v4M422.5 744v4M521.5 153v4M521.5 744v4M620.5 153v4M620.5 744v4M719.5 153v4M719.5 744v4M818.5 153v4M818.5 744v4M917.5 153v4M917.5 744v4M28 227.5h4M1012 227.5h4M28 302.5h4M1012 302.5h4M28 376.5h4M1012 376.5h4M28 451.5h4M1012 451.5h4M28 526.5h4M1012 526.5h4M28 601.5h4M1012 601.5h4M28 675.5h4M1012 675.5h4M28 451.5H1016M521.5 153V748M47.5 448v7M67.5 448v7M86.5 448v7M106.5 448v7M126.5 448v7M146.5 448v7M165.5 448v7M185.5 448v7M205.5 448v7M225.5 448v7M245.5 448v7M264.5 448v7M284.5 448v7M304.5 448v7M324.5 448v7M343.5 448v7M363.5 448v7M383.5 448v7M403.5 448v7M422.5 448v7M442.5 448v7M462.5 448v7M482.5 448v7M502.5 448v7M521.5 448v7M541.5 448v7M561.5 448v7M581.5 448v7M600.5 448v7M620.5 448v7M640.5 448v7M660.5 448v7M679.5 448v7M699.5 448v7M719.5 448v7M739.5 448v7M759.5 448v7M778.5 448v7M798.5 448v7M818.5 448v7M838.5 448v7M857.5 448v7M877.5 448v7M897.5 448v7M917.5 448v7M936.5 448v7M956.5 448v7M976.5 448v7M996.5 448v7M518 167.5h7M518 182.5h7M518 197.5h7M518 212.5h7M518 227.5h7M518 242.5h7M518 257.5h7M518 272.5h7M518 287.5h7M518 302.5h7M518 317.5h7M518 332.5h7M518 346.5h7M518 361.5h7M518 376.5h7M518 391.5h7M518 406.5h7M518 421.5h7M518 436.5h7M518 451.5h7M518 466.5h7M518 481.5h7M518 496.5h7M518 511.5h7M518 526.5h7M518 541.5h7M518 556.5h7M518 571.5h7M518 586.5h7M518 601.5h7M518 616.5h7M518 631.5h7M518 645.5h7M518 660.5h7M518 675.5h7M518 690.5h7M518 705.5h7M518 720.5h7M518 735.5h7" stroke="#e6e6e6" stroke-width="1" fill="none" shape-rendering="crispEdges"/>
<polyline points="28.5,571.9 30.5,571.9 32.5,569.5 34.4,569.5 36.4,569.5 38.4,569.5 40.4,569.5 42.3,569.5 44.3,567.2 46.3,569.5 48.3,569.5 50.2,569.5 52.2,569.5 54.2,569.5 56.2,569.5 58.2,569.5 60.1,569.5 62.1,569.5 64.1,569.5 66.1,571.9 68.0,571.9 70.0,571.9 72.0,571.9 74.0,571.9 75.9,571.9 77.9,574.2 79.9,574.2 81.9,574.2 83.9,576.5 85.8,574.2 87.8,576.5 89.8,576.5 91.8,576.5 93.7,576.5 95.7,578.8 97.7,581.2 99.7,578.8 101.6,581.2 103.6,581.2 105.6,583.5 107.6,583.5 109.6,583.5 111.5,583.5 113.5,585.8 115.5,585.8 117.5,585.8 119.4,585.8 121.4,588.1 123.4,588.1 125.4,588.1 127.3,588.1 129.3,588.1 131.3,588.1 133.3,588.1 135.3,590.5 137.2,588.1 139.2,588.1 141.2,588.1 143.2,588.1 145.1,588.1 147.1,590.5 149.1,590.5 151.1,588.1 153.1,588.1 155.0,588.1 157.0,588.1 159.0,588.1 161.0,588.1 162.9,585.8 164.9,588.1 166.9,585.8 168.9,583.5 170.8,585.8 172.8,583.5 174.8,583.5 176.8,583.5 178.8,583.5 180.7,581.2 182.7,581.2 184.7,581.2 186.7,578.8 188.6,578.8 190.6,578.8 192.6,576.5 194.6,576.5 196.5,574.2 198.5,574.2 200.5,574.2 202.5,574.2 204.5,574.2 206.4,574.2 208.4,574.2 210.4,571.9 212.4,571.9 214.3,571.9 216.3,571.9 218.3,571.9 220.3,569.5 222.2,569.5 224.2,569.5 226.2,569.5 228.2,569.5 230.2,569.5 232.1,569.5 234.1,569.5 236.1,569.5 238.1,569.5 240.0,569.5 242.0,569.5 244.0,569.5 246.0,571.9 247.9,569.5 249.9,571.9 251.9,571.9 253.9,571.9 255.9,571.9 257.8,571.9 259.8,571.9 261.8,574.2 263.8,574.2 265.7,574.2 267.7,576.5 269.7,576.5 271.7,576.5 273.6,578.8 275.6,578.8 277.6,578.8 279.6,578.8 281.6,578.8 283.5,581.2 285.5,581.2 287.5,581.2 289.5,581.2 291.4,583.5 293.4,583.5 295.4,583.5 297.4,583.5 299.3,585.8 301.3,585.8 303.3,585.8 305.3,585.8 307.3,588.1 309.2,585.8 311.2,588.1 313.2,588.1 315.2,588.1 317.1,588.1 319.1,588.1 321.1,590.5 323.1,588.1 325.0,590.5 327.0,588.1 329.0,588.1 331.0,590.5 333.0,590.5 334.9,588.1 336.9,588.1 338.9,588.1 340.9,588.1 342.8,588.1 344.8,588.1 346.8,588.1 348.8,585.8 350.8,585.8 352.7,583.5 354.7,585.8 356.7,585.8 358.7,583.5 360.6,583.5 362.6,581.2 364.6,583.5 366.6,581.2 368.5,581.2 370.5,578.8 372.5,578.8 374.5,576.5 376.5,578.8 378.4,576.5 380.4,576.5 382.4,574.2 384.4,574.2 386.3,574.2 388.3,574.2 390.3,574.2 392.3,574.2 394.2,571.9 396.2,571.9 398.2,571.9 400.2,571.9 402.2,569.5 404.1,569.5 406.1,569.5 408.1,569.5 410.1,569.5 412.0,569.5 414.0,567.2 416.0,569.5 418.0,569.5 419.9,569.5 421.9,569.5 423.9,569.5 425.9,569.5 427.9,569.5 429.8,569.5 431.8,571.9 433.8,571.9 435.8,571.9 437.7,571.9 439.7,571.9 441.7,574.2 443.7,574.2 445.6,574.2 447.6,574.2 449.6,574.2 451.6,574.2 453.6,576.5 455.5,576.5 457.5,576.5 459.5,576.5 461.5,576.5 463.4,578.8 465.4,578.8 467.4,581.2 469.4,581.2 471.3,581.2 473.3,581.2 475.3,581.2 477.3,583.5 479.3,583.5 481.2,583.5 483.2,583.5 485.2,585.8 487.2,585.8 489.1,585.8 491.1,588.1 493.1,588.1 495.1,588.1 497.0,588.1 499.0,588.1 501.0,588.1 503.0,588.1 505.0,588.1 506.9,588.1 508.9,588.1 510.9,588.1 512.9,588.1 514.8,588.1 516.8,588.1 518.8,588.1 520.8,588.1 522.8,588.1 524.7,588.1 526.7,588.1 528.7,585.8 530.7,585.8 532.6,585.8 534.6,585.8 536.6,585.8 538.6,585.8 540.5,583.5 542.5,583.5 544.5,583.5 546.5,583.5 548.5,583.5 550.4,581.2 552.4,581.2 554.4,578.8 556.4,578.8 558.3,578.8 560.3,578.8 562.3,576.5 564.3,576.5 566.2,576.5 568.2,576.5 570.2,574.2 572.2,574.2 574.2,571.9 576.1,571.9 578.1,571.9 580.1,571.9 582.1,571.9 584.0,571.9 586.0,571.9 588.0,571.9 590.0,569.5 591.9,569.5 593.9,569.5 595.9,569.5 597.9,567.2 599.9,569.5 601.8,569.5 603.8,569.5 605.8,569.5 607.8,569.5 609.7,569.5 611.7,569.5 613.7,571.9 615.7,569.5 617.6,569.5 619.6,571.9 621.6,571.9 623.6,574.2 625.6,571.9 627.5,571.9 629.5,574.2 631.5,574.2 633.5,574.2 635.4,576.5 637.4,574.2 639.4,576.5 641.4,576.5 643.3,578.8 645.3,578.8 647.3,578.8 649.3,578.8 651.3,578.8 653.2,581.2 655.2,581.2 657.2,581.2 659.2,583.5 661.1,583.5 663.1,583.5 665.1,583.5 667.1,585.8 669.0,583.5 671.0,585.8 673.0,585.8 675.0,585.8 677.0,585.8 678.9,585.8 680.9,588.1 682.9,588.1 684.9,590.5 686.8,588.1 688.8,588.1 690.8,588.1 692.8,588.1 694.7,588.1 696.7,590.5 698.7,588.1 700.7,590.5 702.7,588.1 704.6,588.1 706.6,588.1 708.6,588.1 710.6,588.1 712.5,588.1 714.5,588.1 716.5,585.8 718.5,585.8 720.4,585.8 722.4,585.8 724.4,583.5 726.4,583.5 728.4,583.5 730.3,583.5 732.3,583.5 734.3,583.5 736.3,581.2 738.2,581.2 740.2,578.8 742.2,578.8 744.2,578.8 746.2,576.5 748.1,576.5 750.1,574.2 752.1,574.2 754.1,574.2 756.0,574.2 758.0,574.2 760.0,571.9 762.0,571.9 763.9,571.9 765.9,571.9 767.9,571.9 769.9,569.5 771.9,571.9 773.8,569.5 775.8,569.5 777.8,569.5 779.8,569.5 781.7,569.5 783.7,569.5 785.7,569.5 787.7,569.5 789.6,569.5 791.6,567.2 793.6,569.5 795.6,569.5 797.6,571.9 799.5,571.9 801.5,571.9 803.5,569.5 805.5,571.9 807.4,571.9 809.4,571.9 811.4,574.2 813.4,574.2 815.3,574.2 817.3,574.2 819.3,574.2 821.3,574.2 823.3,576.5 825.2,576.5 827.2,578.8 829.2,578.8 831.2,578.8 833.1,581.2 835.1,578.8 837.1,581.2 839.1,581.2 841.0,581.2 843.0,583.5 845.0,583.5 847.0,583.5 849.0,583.5 850.9,583.5 852.9,585.8 854.9,585.8 856.9,585.8 858.8,588.1 860.8,585.8 862.8,588.1 864.8,588.1 866.7,588.1 868.7,588.1 870.7,588.1 872.7,588.1 874.7,588.1 876.6,590.5 878.6,588.1 880.6,588.1 882.6,588.1 884.5,590.5 886.5,588.1 888.5,588.1 890.5,588.1 892.4,588.1 894.4,588.1 896.4,588.1 898.4,588.1 900.4,585.8 902.3,585.8 904.3,585.8 906.3,585.8 908.3,585.8 910.2,583.5 912.2,583.5 914.2,583.5 916.2,583.5 918.1,581.2 920.1,581.2 922.1,578.8 924.1,578.8 926.1,578.8 928.0,578.8 930.0,578.8 932.0,576.5 934.0,576.5 935.9,576.5 937.9,574.2 939.9,574.2 941.9,574.2 943.9,574.2 945.8,571.9 947.8,571.9 949.8,569.5 951.8,571.9 953.7,569.5 955.7,569.5 957.7,569.5 959.7,569.5 961.6,569.5 963.6,569.5 965.6,569.5 967.6,569.5 969.6,569.5 971.5,569.5 973.5,569.5 975.5,567.2 977.5,569.5 979.4,569.5 981.4,569.5 983.4,569.5 985.4,569.5 987.3,571.9 989.3,571.9 991.3,571.9 993.3,571.9 995.3,571.9 997.2,571.9 999.2,574.2 1001.2,574.2 1003.2,574.2 1005.1,576.5 1007.1,576.5 1009.1,576.5 1011.1,576.5 1013.0,578.8 1015.0,578.8" stroke="#35c435" stroke-width="1.15" fill="none" stroke-linejoin="round"/>
<polyline points="28.5,523.1 30.5,523.1 32.5,520.7 34.4,520.7 36.4,520.7 38.4,518.4 40.4,518.4 42.3,520.7 44.3,518.4 46.3,520.7 48.3,520.7 50.2,523.1 52.2,525.4 54.2,525.4 56.2,527.7 58.2,530.0 60.1,532.3 62.1,534.7 64.1,537.0 66.1,539.3 68.0,544.0 70.0,546.3 72.0,550.9 74.0,553.3 75.9,557.9 77.9,562.6 79.9,564.9 81.9,569.5 83.9,574.2 85.8,576.5 87.8,581.2 89.8,585.8 91.8,588.1 93.7,592.8 95.7,597.4 97.7,602.1 99.7,604.4 101.6,609.0 103.6,611.4 105.6,616.0 107.6,618.3 109.6,623.0 111.5,625.3 113.5,627.6 115.5,630.0 117.5,632.3 119.4,634.6 121.4,636.9 123.4,636.9 125.4,639.3 127.3,641.6 129.3,641.6 131.3,641.6 133.3,643.9 135.3,643.9 137.2,643.9 139.2,641.6 141.2,641.6 143.2,641.6 145.1,639.3 147.1,636.9 149.1,636.9 151.1,634.6 153.1,632.3 155.0,630.0 157.0,627.6 159.0,623.0 161.0,620.7 162.9,616.0 164.9,613.7 166.9,609.0 168.9,606.7 170.8,599.8 172.8,597.4 174.8,592.8 176.8,588.1 178.8,585.8 180.7,578.8 182.7,574.2 184.7,569.5 186.7,567.2 188.6,562.6 190.6,557.9 192.6,553.3 194.6,550.9 196.5,546.3 198.5,544.0 200.5,539.3 202.5,537.0 204.5,534.7 206.4,532.3 208.4,527.7 210.4,527.7 212.4,525.4 214.3,523.1 216.3,520.7 218.3,520.7 220.3,518.4 222.2,518.4 224.2,518.4 226.2,520.7 228.2,520.7 230.2,520.7 232.1,520.7 234.1,523.1 236.1,525.4 238.1,525.4 240.0,527.7 242.0,530.0 244.0,532.3 246.0,534.7 247.9,537.0 249.9,539.3 251.9,544.0 253.9,546.3 255.9,548.6 257.8,553.3 259.8,557.9 261.8,560.2 263.8,564.9 265.7,569.5 267.7,571.9 269.7,576.5 271.7,578.8 273.6,583.5 275.6,588.1 277.6,592.8 279.6,595.1 281.6,599.8 283.5,604.4 285.5,606.7 287.5,611.4 289.5,613.7 291.4,618.3 293.4,620.7 295.4,623.0 297.4,625.3 299.3,630.0 301.3,632.3 303.3,634.6 305.3,634.6 307.3,636.9 309.2,639.3 311.2,641.6 313.2,641.6 315.2,641.6 317.1,643.9 319.1,643.9 321.1,643.9 323.1,643.9 325.0,641.6 327.0,641.6 329.0,641.6 331.0,639.3 333.0,636.9 334.9,634.6 336.9,632.3 338.9,630.0 340.9,627.6 342.8,623.0 344.8,620.7 346.8,618.3 348.8,613.7 350.8,611.4 352.7,606.7 354.7,602.1 356.7,597.4 358.7,592.8 360.6,588.1 362.6,585.8 364.6,581.2 366.6,576.5 368.5,571.9 370.5,567.2 372.5,564.9 374.5,557.9 376.5,555.6 378.4,550.9 380.4,546.3 382.4,544.0 384.4,539.3 386.3,537.0 388.3,534.7 390.3,532.3 392.3,527.7 394.2,527.7 396.2,525.4 398.2,523.1 400.2,520.7 402.2,520.7 404.1,520.7 406.1,518.4 408.1,518.4 410.1,518.4 412.0,518.4 414.0,520.7 416.0,520.7 418.0,523.1 419.9,523.1 421.9,525.4 423.9,527.7 425.9,530.0 427.9,532.3 429.8,534.7 431.8,537.0 433.8,539.3 435.8,544.0 437.7,546.3 439.7,548.6 441.7,553.3 443.7,555.6 445.6,560.2 447.6,562.6 449.6,567.2 451.6,571.9 453.6,576.5 455.5,578.8 457.5,583.5 459.5,588.1 461.5,592.8 463.4,595.1 465.4,599.8 467.4,604.4 469.4,606.7 471.3,611.4 473.3,613.7 475.3,618.3 477.3,620.7 479.3,623.0 481.2,627.6 483.2,627.6 485.2,632.3 487.2,634.6 489.1,636.9 491.1,636.9 493.1,639.3 495.1,639.3 497.0,641.6 499.0,641.6 501.0,641.6 503.0,643.9 505.0,643.9 506.9,643.9 508.9,641.6 510.9,641.6 512.9,639.3 514.8,639.3 516.8,636.9 518.8,634.6 520.8,632.3 522.8,630.0 524.7,627.6 526.7,625.3 528.7,620.7 530.7,618.3 532.6,613.7 534.6,611.4 536.6,606.7 538.6,604.4 540.5,599.8 542.5,595.1 544.5,590.5 546.5,585.8 548.5,581.2 550.4,576.5 552.4,571.9 554.4,567.2 556.4,564.9 558.3,560.2 560.3,555.6 562.3,550.9 564.3,548.6 566.2,544.0 568.2,541.6 570.2,539.3 572.2,534.7 574.2,532.3 576.1,530.0 578.1,527.7 580.1,525.4 582.1,523.1 584.0,523.1 586.0,520.7 588.0,520.7 590.0,518.4 591.9,518.4 593.9,518.4 595.9,520.7 597.9,520.7 599.9,520.7 601.8,523.1 603.8,523.1 605.8,525.4 607.8,527.7 609.7,530.0 611.7,530.0 613.7,532.3 615.7,537.0 617.6,539.3 619.6,541.6 621.6,546.3 623.6,548.6 625.6,550.9 627.5,555.6 629.5,560.2 631.5,562.6 633.5,567.2 635.4,571.9 637.4,574.2 639.4,578.8 641.4,583.5 643.3,585.8 645.3,590.5 647.3,595.1 649.3,597.4 651.3,602.1 653.2,606.7 655.2,609.0 657.2,613.7 659.2,616.0 661.1,620.7 663.1,623.0 665.1,625.3 667.1,627.6 669.0,632.3 671.0,634.6 673.0,634.6 675.0,636.9 677.0,639.3 678.9,639.3 680.9,641.6 682.9,641.6 684.9,643.9 686.8,643.9 688.8,643.9 690.8,641.6 692.8,641.6 694.7,641.6 696.7,639.3 698.7,639.3 700.7,636.9 702.7,636.9 704.6,634.6 706.6,630.0 708.6,627.6 710.6,625.3 712.5,620.7 714.5,618.3 716.5,613.7 718.5,611.4 720.4,606.7 722.4,602.1 724.4,599.8 726.4,595.1 728.4,590.5 730.3,585.8 732.3,581.2 734.3,576.5 736.3,571.9 738.2,569.5 740.2,564.9 742.2,560.2 744.2,555.6 746.2,553.3 748.1,548.6 750.1,546.3 752.1,541.6 754.1,539.3 756.0,534.7 758.0,532.3 760.0,530.0 762.0,527.7 763.9,525.4 765.9,523.1 767.9,523.1 769.9,520.7 771.9,520.7 773.8,520.7 775.8,520.7 777.8,518.4 779.8,520.7 781.7,520.7 783.7,520.7 785.7,523.1 787.7,523.1 789.6,525.4 791.6,525.4 793.6,527.7 795.6,532.3 797.6,532.3 799.5,534.7 801.5,539.3 803.5,541.6 805.5,544.0 807.4,548.6 809.4,553.3 811.4,555.6 813.4,557.9 815.3,562.6 817.3,567.2 819.3,569.5 821.3,574.2 823.3,578.8 825.2,583.5 827.2,585.8 829.2,590.5 831.2,595.1 833.1,597.4 835.1,602.1 837.1,606.7 839.1,609.0 841.0,613.7 843.0,616.0 845.0,618.3 847.0,623.0 849.0,625.3 850.9,627.6 852.9,630.0 854.9,632.3 856.9,634.6 858.8,636.9 860.8,639.3 862.8,639.3 864.8,641.6 866.7,641.6 868.7,643.9 870.7,641.6 872.7,643.9 874.7,643.9 876.6,643.9 878.6,641.6 880.6,641.6 882.6,639.3 884.5,636.9 886.5,636.9 888.5,632.3 890.5,632.3 892.4,627.6 894.4,625.3 896.4,623.0 898.4,618.3 900.4,616.0 902.3,611.4 904.3,609.0 906.3,604.4 908.3,599.8 910.2,595.1 912.2,590.5 914.2,585.8 916.2,581.2 918.1,578.8 920.1,574.2 922.1,569.5 924.1,564.9 926.1,560.2 928.0,557.9 930.0,553.3 932.0,548.6 934.0,546.3 935.9,541.6 937.9,539.3 939.9,537.0 941.9,532.3 943.9,530.0 945.8,527.7 947.8,525.4 949.8,525.4 951.8,523.1 953.7,523.1 955.7,520.7 957.7,520.7 959.7,520.7 961.6,518.4 963.6,518.4 965.6,518.4 967.6,520.7 969.6,520.7 971.5,523.1 973.5,525.4 975.5,525.4 977.5,527.7 979.4,530.0 981.4,532.3 983.4,534.7 985.4,537.0 987.3,541.6 989.3,544.0 991.3,546.3 993.3,550.9 995.3,553.3 997.2,557.9 999.2,562.6 1001.2,564.9 1003.2,569.5 1005.1,574.2 1007.1,576.5 1009.1,581.2 1011.1,585.8 1013.0,590.5 1015.0,592.8" stroke="#e2e25a" stroke-width="1.15" fill="none" stroke-linejoin="round"/>
</svg>
<svg style="left:6px;top:572px" width="1032" height="18" viewBox="6 572 1032 18">
<path d="M8 575h12.500l5 5.700-5 5.800h-12.500z" fill="#18f018"/>
<path d="M1036 575h-12l-5 5.700 5 5.800h12z" fill="#f8f820" stroke="#1a1a00" stroke-width="0.8"/>
<text x="16" y="585.300" text-anchor="middle" font-family="Liberation Sans, sans-serif" font-weight="bold" font-size="11.500" fill="#000">2</text>
<text x="1029.500" y="584.800" text-anchor="middle" font-family="Liberation Sans, sans-serif" font-size="11" fill="#000">T</text>
</svg>
<div style="left:1043px;top:82px;width:4px;height:699px;background:#f6f6f4;"></div>
<div style="left:1047px;top:82px;width:233px;height:699px;background:#d4d0c8;"></div>
<div style="left:1047px;top:81px;width:232px;height:19px;background:#b6b2a8;border-top:1px solid #8a867e;"></div>
<span class="t" id="t21" style="left:1052.00px;top:82.84px;font-size:12px;line-height:16px;color:#f4f4f2;transform:scaleX(0.9351);transform-origin:0 0;">Control Panel</span>
<svg style="left:1246px;top:84px" width="32" height="14" viewBox="1246 84 32 14">
<path d="M1250.500 87.500h5M1251.500 87.500v5M1254.500 87.500v5M1249.500 92.500h7M1253 93v3.500" stroke="#fff" stroke-width="1" fill="none"/><path d="M1254 88v4" stroke="#fff" stroke-width="1"/>
<path d="M1266.500 86.500l7 7M1273.500 86.500l-7 7" stroke="#fff" stroke-width="1.500" fill="none"/></svg>
<div class="combo" style="left:1047px;top:101px;width:231px;height:20px"></div>
<div class="cbtn" style="left:1262px;top:103px;width:15px;height:16px"></div>
<span class="t" id="t22" style="left:1051.50px;top:103.64px;font-size:12px;line-height:16px;color:#000;transform:scaleX(0.8669);transform-origin:0 0;">Scope</span>
<div style="left:1047px;top:121px;width:233px;height:26px;background:linear-gradient(180deg,#ffffff 0%,#fdfdfc 30%,#efede9 55%,#dcd9d2 80%,#d4d0c8 100%);"></div>
<div style="left:1264px;top:147px;width:16px;height:634px;background:#ebe9e4;background-image:repeating-conic-gradient(#fff 0% 25%,#d4d0c8 0% 50%);background-size:2px 2px;"></div>
<div class="wbtn" style="left:1264px;top:147px;width:16px;height:15px"></div>
<div class="wbtn" style="left:1264px;top:766px;width:16px;height:15px"></div>
<div class="wbtn" style="left:1264px;top:162px;width:16px;height:494px"></div>
<svg style="left:1264px;top:147px" width="16" height="634" viewBox="0 0 16 634"><path d="M4 9.500h7l-3.500-4z" fill="#000"/><path d="M4 624.500h7l-3.500 4z" fill="#000"/></svg>
<div class="grp" style="left:1052px;top:159px;width:202px;height:116px"></div>
<div style="left:1125.5px;top:153px;width:53.5px;height:13px;background:#d4d0c8;"></div>
<span class="t" id="t23" style="left:1128.50px;top:152.19px;font-size:11px;line-height:14px;color:#000;transform:scaleX(0.9590);transform-origin:0 0;">Horizontal</span>
<div class="grp" style="left:1052px;top:296px;width:202px;height:282px"></div>
<div style="left:1131.8px;top:290px;width:43.200000000000045px;height:13px;background:#d4d0c8;"></div>
<span class="t" id="t24" style="left:1134.80px;top:289.49px;font-size:11px;line-height:14px;color:#000;transform:scaleX(1.0311);transform-origin:0 0;">Vertical</span>
<div class="grp" style="left:1052px;top:599px;width:202px;height:160px"></div>
<div style="left:1132.6px;top:593px;width:39.0px;height:13px;background:#d4d0c8;"></div>
<span class="t" id="t25" style="left:1135.60px;top:592.59px;font-size:11px;line-height:14px;color:#000;transform:scaleX(0.9583);transform-origin:0 0;">Trigger</span>
<span class="t" id="t26" style="left:1062.20px;top:170.99px;font-size:11px;line-height:14px;color:#000;transform:scaleX(0.8935);transform-origin:0 0;">Time/DIV</span>
<div class="combo" style="left:1061px;top:190px;width:73px;height:21px"></div>
<div class="cbtn" style="left:1116px;top:192px;width:16px;height:17px"></div>
<span class="t" id="t27" style="left:1064.60px;top:193.89px;font-size:11px;line-height:14px;color:#000;transform:scaleX(0.9756);transform-origin:0 0;">50.00us</span>
<span class="t" id="t28" style="left:1062.00px;top:220.49px;font-size:11px;line-height:14px;color:#000;transform:scaleX(0.9184);transform-origin:0 0;">Format</span>
<div class="combo" style="left:1061px;top:242px;width:73px;height:21px"></div>
<div class="cbtn" style="left:1116px;top:244px;width:16px;height:17px"></div>
<span class="t" id="t29" style="left:1064.60px;top:245.89px;font-size:11px;line-height:14px;color:#000;transform:scaleX(1.0228);transform-origin:0 0;">Y-T</span>
<div class="chk" style="left:1061px;top:312px;width:13px;height:13px"></div>
<svg style="left:1061px;top:312px" width="13" height="13" viewBox="0 0 13 13"><path d="M3 5.500l2.500 2.500 4.500-4.500" stroke="#000" stroke-width="2" fill="none"/></svg>
<span class="t" id="t30" style="left:1078.50px;top:311.19px;font-size:11px;line-height:14px;color:#000;transform:scaleX(0.8403);transform-origin:0 0;">CH1</span>
<div class="combo" style="left:1061px;top:333px;width:73px;height:21px"></div>
<div class="cbtn" style="left:1116px;top:335px;width:16px;height:17px"></div>
<span class="t" id="t31" style="left:1064.60px;top:336.89px;font-size:11px;line-height:14px;color:#000;transform:scaleX(0.9600);transform-origin:0 0;">10.0V</span>
<div class="combo" style="left:1061px;top:403px;width:73px;height:21px"></div>
<div class="cbtn" style="left:1116px;top:405px;width:16px;height:17px"></div>
<span class="t" id="t32" style="left:1064.60px;top:406.89px;font-size:11px;line-height:14px;color:#000;transform:scaleX(1.0141);transform-origin:0 0;">x10</span>
<div class="chk" style="left:1172px;top:410px;width:13px;height:13px"></div>
<span class="t" id="t33" style="left:1189.30px;top:409.39px;font-size:11px;line-height:14px;color:#000;transform:scaleX(0.9704);transform-origin:0 0;">Invert</span>
<div class="chk" style="left:1061px;top:452px;width:13px;height:13px"></div>
<svg style="left:1061px;top:452px" width="13" height="13" viewBox="0 0 13 13"><path d="M3 5.500l2.500 2.500 4.500-4.500" stroke="#000" stroke-width="2" fill="none"/></svg>
<span class="t" id="t34" style="left:1078.50px;top:451.19px;font-size:11px;line-height:14px;color:#000;transform:scaleX(0.8948);transform-origin:0 0;">CH2</span>
<div class="combo" style="left:1061px;top:473px;width:73px;height:21px"></div>
<div class="cbtn" style="left:1116px;top:475px;width:16px;height:17px"></div>
<span class="t" id="t35" style="left:1064.60px;top:476.89px;font-size:11px;line-height:14px;color:#000;transform:scaleX(0.9530);transform-origin:0 0;">1.00V</span>
<div class="combo" style="left:1061px;top:543px;width:73px;height:21px"></div>
<div class="cbtn" style="left:1116px;top:545px;width:16px;height:17px"></div>
<span class="t" id="t36" style="left:1064.60px;top:546.89px;font-size:11px;line-height:14px;color:#000;transform:scaleX(0.8946);transform-origin:0 0;">x1</span>
<div class="chk" style="left:1172px;top:550px;width:13px;height:13px"></div>
<span class="t" id="t37" style="left:1189.30px;top:549.39px;font-size:11px;line-height:14px;color:#000;transform:scaleX(0.9704);transform-origin:0 0;">Invert</span>
<span class="t" id="t38" style="left:1064.70px;top:623.19px;font-size:11px;line-height:14px;color:#000;transform:scaleX(0.9644);transform-origin:0 0;">Trigger Mode</span>
<div class="combo" style="left:1161px;top:620px;width:73px;height:21px"></div>
<div class="cbtn" style="left:1216px;top:622px;width:16px;height:17px"></div>
<span class="t" id="t39" style="left:1164.60px;top:623.89px;font-size:11px;line-height:14px;color:#000;transform:scaleX(0.9260);transform-origin:0 0;">Edge</span>
<span class="t" id="t40" style="left:1064.70px;top:658.19px;font-size:11px;line-height:14px;color:#000;transform:scaleX(1.0053);transform-origin:0 0;">Trigger Sweep</span>
<div class="combo" style="left:1161px;top:655px;width:73px;height:21px"></div>
<div class="cbtn" style="left:1216px;top:657px;width:16px;height:17px"></div>
<span class="t" id="t41" style="left:1164.60px;top:658.89px;font-size:11px;line-height:14px;color:#000;transform:scaleX(0.9355);transform-origin:0 0;">AUTO</span>
<span class="t" id="t42" style="left:1064.70px;top:693.19px;font-size:11px;line-height:14px;color:#000;transform:scaleX(0.9883);transform-origin:0 0;">Trigger Source</span>
<div class="combo" style="left:1161px;top:690px;width:73px;height:21px"></div>
<div class="cbtn" style="left:1216px;top:692px;width:16px;height:17px"></div>
<span class="t" id="t43" style="left:1164.60px;top:693.89px;font-size:11px;line-height:14px;color:#000;transform:scaleX(0.8358);transform-origin:0 0;">CH1</span>
<span class="t" id="t44" style="left:1064.70px;top:728.19px;font-size:11px;line-height:14px;color:#000;transform:scaleX(0.9722);transform-origin:0 0;">Trigger Slope</span>
<div class="combo" style="left:1161px;top:725px;width:73px;height:21px"></div>
<div class="cbtn" style="left:1216px;top:727px;width:16px;height:17px"></div>
<span class="t" id="t45" style="left:1164.60px;top:728.89px;font-size:11px;line-height:14px;color:#000;transform:scaleX(0.9942);transform-origin:0 0;">+</span>
<svg style="left:1149.5px;top:181px" width="92" height="84" viewBox="1149.5 181 92 84"><circle cx="1195.5" cy="223" r="31" stroke="#b9b9c1" stroke-width="5.500" fill="none"/><path d="M1173.58 244.92A31 31 0 1 1 1215.43 199.25" stroke="#d9d9df" stroke-width="5.500" fill="none"/><path d="M1203.52 193.06A31 31 0 0 1 1215.43 199.25" stroke="#e8e8ec" stroke-width="5.500" fill="none"/><circle cx="1195.5" cy="223" r="33.900" stroke="#111" stroke-width="1.050" fill="none"/><path d="M1169.55 248.95A36.7 36.7 0 1 1 1221.45 248.95" stroke="#111" stroke-width="1.050" fill="none"/><path d="M1172.87 245.63L1164.74 253.76M1218.13 245.63L1226.26 253.76" stroke="#111" stroke-width="1.300"/><circle cx="1195.5" cy="223" r="27.900" fill="#0808cc" stroke="#202020" stroke-width="0.8"/><path d="M1199.04 218.79L1210.28 205.38" stroke="#ffffff" stroke-width="2" stroke-linecap="round"/></svg>
<svg style="left:1149.5px;top:316px" width="92" height="84" viewBox="1149.5 316 92 84"><circle cx="1195.5" cy="358" r="31" stroke="#b9b9c1" stroke-width="5.500" fill="none"/><path d="M1173.58 379.92A31 31 0 1 1 1215.43 334.25" stroke="#d9d9df" stroke-width="5.500" fill="none"/><path d="M1203.52 328.06A31 31 0 0 1 1215.43 334.25" stroke="#e8e8ec" stroke-width="5.500" fill="none"/><circle cx="1195.5" cy="358" r="33.900" stroke="#111" stroke-width="1.050" fill="none"/><path d="M1169.55 383.95A36.7 36.7 0 1 1 1221.45 383.95" stroke="#111" stroke-width="1.050" fill="none"/><path d="M1172.87 380.63L1164.74 388.76M1218.13 380.63L1226.26 388.76" stroke="#111" stroke-width="1.300"/><circle cx="1195.5" cy="358" r="27.900" fill="#ffff00" stroke="#202020" stroke-width="0.8"/><path d="M1190.05 354.46L1175.79 345.20" stroke="#ffffa0" stroke-width="2" stroke-linecap="round"/></svg>
<svg style="left:1149.5px;top:458px" width="92" height="84" viewBox="1149.5 458 92 84"><circle cx="1195.5" cy="500" r="31" stroke="#b9b9c1" stroke-width="5.500" fill="none"/><path d="M1173.58 521.92A31 31 0 1 1 1215.43 476.25" stroke="#d9d9df" stroke-width="5.500" fill="none"/><path d="M1203.52 470.06A31 31 0 0 1 1215.43 476.25" stroke="#e8e8ec" stroke-width="5.500" fill="none"/><circle cx="1195.5" cy="500" r="33.900" stroke="#111" stroke-width="1.050" fill="none"/><path d="M1169.55 525.95A36.7 36.7 0 1 1 1221.45 525.95" stroke="#111" stroke-width="1.050" fill="none"/><path d="M1172.87 522.63L1164.74 530.76M1218.13 522.63L1226.26 530.76" stroke="#111" stroke-width="1.300"/><circle cx="1195.5" cy="500" r="27.900" fill="#00ff18" stroke="#202020" stroke-width="0.8"/><path d="M1190.11 496.37L1176.02 486.86" stroke="#d0ffb0" stroke-width="2" stroke-linecap="round"/></svg>
<div style="left:0px;top:781px;width:1280px;height:19px;background:linear-gradient(90deg,#d4d0c8 0%,#dcd9d3 30%,#eeedea 60%,#fafaf9 85%,#fdfdfd 100%);"></div>
<div style="left:0px;top:799px;width:1280px;height:1px;background:#e4e2dc;"></div>
<span class="t" id="t46" style="left:5.00px;top:784.22px;font-size:11.5px;line-height:15px;color:#000;">Running...</span>
<span class="t" id="t47" style="left:1175.50px;top:784.12px;font-size:11.5px;line-height:15px;color:#000;transform:scaleX(0.9534);transform-origin:0 0;">08-11-2013 &nbsp;04:30</span>
</div></body></html>
